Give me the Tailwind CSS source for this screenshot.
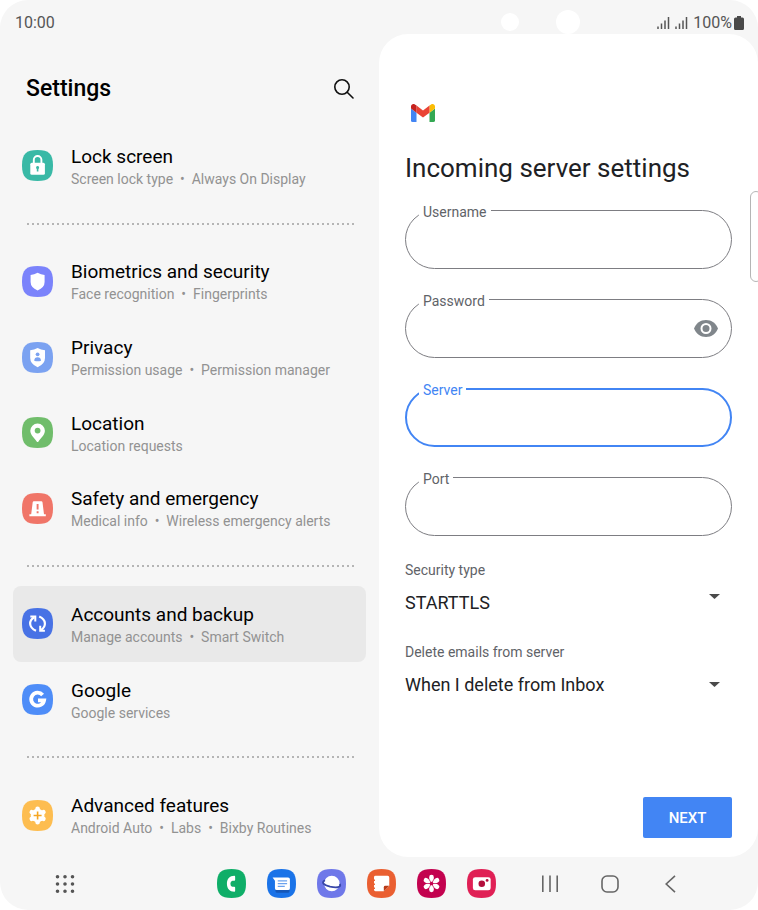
<!DOCTYPE html>
<html lang="en">
<head>
<meta charset="utf-8">
<meta name="viewport" content="width=device-width, initial-scale=1">
<title>Settings</title>
<script src="https://cdn.jsdelivr.net/npm/@tailwindcss/browser@4"></script>
</head>
<body class="bg-white font-[Roboto,sans-serif] text-black">
<svg class="hidden">
  <symbol id="squircle" viewBox="0 0 31 31"><path d="M15.500 0C27 0 31 4 31 15.500S27 31 15.500 31 0 27 0 15.500 4 0 15.500 0Z" fill="currentColor"/></symbol>
</svg>
<div class="relative flex min-h-screen flex-col overflow-hidden rounded-[28px] bg-[#f6f6f6]">
  <header class="relative flex h-[34px] items-center justify-between pt-3 pr-3.5 pl-[15px] text-base text-[#555]">
    <time>10:00</time>
    <div class="flex items-center gap-[5px]">
      <svg class="h-3 w-[13px]" viewBox="0 0 13 12" stroke="#555" stroke-width="1.500"><path d="M1 9.500V12M4.500 6.500V12M8 3.500V12M11.500 0V12"/></svg>
      <svg class="h-3 w-[13px]" viewBox="0 0 13 12" stroke="#555" stroke-width="1.500"><path d="M1 9.500V12M4.500 6.500V12M8 3.500V12M11.500 0V12"/></svg>
      <div class="flex items-center gap-0.5"><span>100%</span>
      <svg class="h-3.5 w-[10px]" viewBox="0 0 10 14"><path d="M3 0H7V1.500H8.500Q10 1.500 10 3V12.500Q10 14 8.500 14H1.500Q0 14 0 12.500V3Q0 1.500 1.500 1.500H3Z" fill="#4a4a4a"/></svg></div>
    </div>
    <span class="absolute top-[13px] left-[501px] size-[18px] rounded-full bg-white"></span>
    <span class="absolute top-[10px] left-[556px] size-[24px] rounded-full bg-white"></span>
  </header>

  <div class="grid flex-1 grid-cols-2">
    <nav class="flex flex-col px-[13px] pb-1" aria-label="Settings">
      <div class="flex h-[94px] items-center justify-between pt-4 pr-3 pl-[13px]">
        <h1 class="text-[23px] font-medium">Settings</h1>
        <button aria-label="Search" class="flex size-5 items-center justify-center"><svg class="size-5" viewBox="0 0 20 20" fill="none" stroke="#111" stroke-width="1.600" stroke-linecap="round"><circle cx="8" cy="8" r="7.200"/><path d="M13.200 13.200L19 19"/></svg></button>
      </div>

      <a href="#" class="flex flex-1 items-center gap-[18px] rounded-lg pl-[9px]">
        <svg class="size-[31px] shrink-0 text-[#39b9a6]" viewBox="0 0 31 31"><use href="#squircle"/><path d="M11.800 14V9.800a3.800 3.800 0 0 1 7.600 0V14" fill="none" stroke="#fff" stroke-width="1.900"/><rect x="8.300" y="12.700" width="14.600" height="12" rx="1.500" fill="#fff"/><path d="M15.600 16a1.700 1.700 0 0 1 .8 3.100V21.500h-1.600V19.100A1.700 1.700 0 0 1 15.600 16Z" fill="currentColor"/></svg>
        <span class="flex flex-col pt-0.5"><span class="text-[19px] leading-6">Lock screen</span><span class="text-sm leading-5 whitespace-pre text-[#929292]">Screen lock type  •  Always On Display</span></span>
      </a>
      <div class="flex h-10 items-center pr-[10px] pl-3.5"><div class="h-0.5 w-full bg-[repeating-linear-gradient(90deg,#b5b5b5_0_2px,transparent_2px_5px)]"></div></div>
      <a href="#" class="flex flex-1 items-center gap-[18px] rounded-lg pl-[9px]">
        <svg class="size-[31px] shrink-0 text-[#7b83fb]" viewBox="0 0 31 31"><use href="#squircle"/><path d="M15.600 6.800Q19 8.800 22.600 8.900V16Q22.600 21.500 15.600 24.500Q8.600 21.500 8.600 16V8.900Q12.200 8.800 15.600 6.800Z" fill="#fff"/></svg>
        <span class="flex flex-col pt-0.5"><span class="text-[19px] leading-6">Biometrics and security</span><span class="text-sm leading-5 whitespace-pre text-[#929292]">Face recognition  •  Fingerprints</span></span>
      </a>
      <a href="#" class="flex flex-1 items-center gap-[18px] rounded-lg pl-[9px]">
        <svg class="size-[31px] shrink-0 text-[#7ba2f1]" viewBox="0 0 31 31"><use href="#squircle"/><path d="M15.600 6Q19 8 23 8.200V16Q23 22 15.600 25.200Q8.200 22 8.200 16V8.200Q12.200 8 15.600 6Z" fill="#fff"/><circle cx="15.600" cy="12.300" r="1.900" fill="currentColor"/><path d="M12.200 18.700Q12.400 15.300 15.600 15.300T19 18.700Q15.600 20 12.200 18.700Z" fill="currentColor"/></svg>
        <span class="flex flex-col pt-0.5"><span class="text-[19px] leading-6">Privacy</span><span class="text-sm leading-5 whitespace-pre text-[#929292]">Permission usage  •  Permission manager</span></span>
      </a>
      <a href="#" class="flex flex-1 items-center gap-[18px] rounded-lg pl-[9px]">
        <svg class="size-[31px] shrink-0 text-[#70bd6b]" viewBox="0 0 31 31"><use href="#squircle"/><path d="M15.600 6.500a7.300 7.300 0 0 1 7.300 7.300c0 4.200-4.300 7.500-6.400 10.600q-.9 1-1.800 0C12.600 21.300 8.300 18 8.300 13.800a7.300 7.300 0 0 1 7.300-7.300Z" fill="#fff"/><circle cx="15.600" cy="13.600" r="2.900" fill="currentColor"/></svg>
        <span class="flex flex-col pt-0.5"><span class="text-[19px] leading-6">Location</span><span class="text-sm leading-5 whitespace-pre text-[#929292]">Location requests</span></span>
      </a>
      <a href="#" class="flex flex-1 items-center gap-[18px] rounded-lg pl-[9px]">
        <svg class="size-[31px] shrink-0 text-[#f07568]" viewBox="0 0 31 31"><use href="#squircle"/><path d="M11.800 8.300H19.400Q20.300 8.300 20.500 9.300L22 21.300H23.800V23.300H7.400V21.300H9.200L10.700 9.300Q10.900 8.300 11.800 8.300Z" fill="#fff"/><path d="M15.600 11V16.500M15.600 18.200V20.200" stroke="currentColor" stroke-width="1.900"/></svg>
        <span class="flex flex-col pt-0.5"><span class="text-[19px] leading-6">Safety and emergency</span><span class="text-sm leading-5 whitespace-pre text-[#929292]">Medical info  •  Wireless emergency alerts</span></span>
      </a>
      <div class="flex h-10 items-center pr-[10px] pl-3.5"><div class="h-0.5 w-full bg-[repeating-linear-gradient(90deg,#b5b5b5_0_2px,transparent_2px_5px)]"></div></div>
      <a href="#" aria-current="page" class="flex flex-1 items-center gap-[18px] rounded-lg bg-[#e9e9e9] pl-[9px]">
        <svg class="size-[31px] shrink-0 text-[#4872e5]" viewBox="0 0 31 31"><use href="#squircle"/><path d="M14 22.800C6.500 19.500 6.500 12.500 12.300 9.200M17.200 8.400C24.500 11.500 24.500 18.500 18.900 22" fill="none" stroke="#fff" stroke-width="2.200"/><path d="M8.300 8.500H13.300V13.500M22.900 22.700H18.200V17.700" fill="none" stroke="#fff" stroke-width="2"/></svg>
        <span class="flex flex-col pt-0.5"><span class="text-[19px] leading-6">Accounts and backup</span><span class="text-sm leading-5 whitespace-pre text-[#929292]">Manage accounts  •  Smart Switch</span></span>
      </a>
      <a href="#" class="flex flex-1 items-center gap-[18px] rounded-lg pl-[9px]">
        <svg class="size-[31px] shrink-0 text-[#4e8df8]" viewBox="0 0 31 31"><use href="#squircle"/><path d="M20.600 10.900A6.500 6.500 0 1 0 22.100 16.300H16" fill="none" stroke="#fff" stroke-width="3.800"/></svg>
        <span class="flex flex-col pt-0.5"><span class="text-[19px] leading-6">Google</span><span class="text-sm leading-5 whitespace-pre text-[#929292]">Google services</span></span>
      </a>
      <div class="flex h-10 items-center pr-[10px] pl-3.5"><div class="h-0.5 w-full bg-[repeating-linear-gradient(90deg,#b5b5b5_0_2px,transparent_2px_5px)]"></div></div>
      <a href="#" class="flex flex-1 items-center gap-[18px] rounded-lg pl-[9px]">
        <svg class="size-[31px] shrink-0 text-[#fdbd50]" viewBox="0 0 31 31"><use href="#squircle"/><circle cx="15.600" cy="15.500" r="6.800" fill="#fff"/><path d="M15.600 8.800V22.200M9.800 12.200L21.400 18.800M9.800 18.800L21.400 12.200" stroke="#fff" stroke-width="4.600" stroke-linecap="round"/><path d="M15.600 11.500V19.500M11.600 15.500H19.600" stroke="#f5a623" stroke-width="1.600"/></svg>
        <span class="flex flex-col pt-0.5"><span class="text-[19px] leading-6">Advanced features</span><span class="text-sm leading-5 whitespace-pre text-[#929292]">Android Auto  •  Labs  •  Bixby Routines</span></span>
      </a>
    </nav>

    <main class="flex flex-col rounded-[29px] bg-white pt-[70px] pr-[26px] pb-[19px] pl-[26px] text-[#202124]">
      <svg class="ml-1.5 h-[18px] w-6" viewBox="0 0 24 18"><path fill="#4285f4" d="M1.600 18H5.500V8.700L0 4.600V16.400Q0 18 1.600 18Z"/><path fill="#34a853" d="M18.500 18H22.400Q24 18 24 16.400V4.600L18.500 8.700Z"/><path fill="#fbbc04" d="M18.500 1.600V8.700L24 4.600V2.400C24 .4 21.700-.7 20.100.5Z"/><path fill="#ea4335" d="M5.500 8.700V1.600L12 6.500 18.500 1.600V8.700L12 13.600Z"/><path fill="#c5221f" d="M0 2.400V4.600L5.500 8.700V1.600L3.900.5C2.300-.7 0 .4 0 2.400Z"/></svg>
      <h2 class="mt-7 text-[26px] leading-9">Incoming server settings</h2>
      <form class="mt-6 flex flex-1 flex-col">
        <div class="flex flex-col gap-[30px]">
          <div class="relative">
            <label for="username" class="absolute -top-2 left-3.5 bg-white px-1 text-sm leading-5 text-[#5f6368]">Username</label>
            <input id="username" type="text" class="block h-[59px] w-full rounded-full border border-[#7d7d82] px-7 outline-none">
          </div>
          <div class="relative">
            <label for="password" class="absolute -top-2 left-3.5 bg-white px-1 text-sm leading-5 text-[#5f6368]">Password</label>
            <input id="password" type="password" class="block h-[59px] w-full rounded-full border border-[#7d7d82] pr-14 pl-7 outline-none">
            <button type="button" aria-label="Show password" class="absolute top-[21px] right-3.5"><svg class="h-[17px] w-6" viewBox="0 0 24 17"><path d="M12 0C6.500 0 2 3.400 0 8.500 2 13.600 6.500 17 12 17S22 13.600 24 8.500C22 3.400 17.500 0 12 0Z" fill="#80868b"/><circle cx="12" cy="8.500" r="4.500" fill="#80868b" stroke="#fff" stroke-width="2"/></svg></button>
          </div>
          <div class="relative">
            <label for="server" class="absolute -top-2 left-3.5 bg-white px-1 text-sm leading-5 text-[#4285f4]">Server</label>
            <input id="server" type="text" class="block h-[59px] w-full rounded-full border-2 border-[#4285f4] px-7 outline-none">
          </div>
          <div class="relative">
            <label for="port" class="absolute -top-2 left-3.5 bg-white px-1 text-sm leading-5 text-[#5f6368]">Port</label>
            <input id="port" type="text" class="block h-[59px] w-full rounded-full border border-[#7d7d82] px-7 outline-none">
          </div>
        </div>
        <label for="security" class="mt-6 text-sm leading-5 text-[#5f6368]">Security type</label>
        <div class="relative mt-2.5">
          <select id="security" class="block h-[26px] w-full appearance-none text-lg leading-6"><option>STARTTLS</option></select>
          <svg class="pointer-events-none absolute top-1 right-3 h-[5px] w-[11px]" viewBox="0 0 11 5"><path d="M0 0H11L5.500 5Z" fill="#4a4a4a"/></svg>
        </div>
        <label for="delete" class="mt-[26px] text-sm leading-5 text-[#5f6368]">Delete emails from server</label>
        <div class="relative mt-2.5">
          <select id="delete" class="block h-[26px] w-full appearance-none text-lg leading-6"><option>When I delete from Inbox</option></select>
          <svg class="pointer-events-none absolute top-2.5 right-3 h-[5px] w-[11px]" viewBox="0 0 11 5"><path d="M0 0H11L5.500 5Z" fill="#4a4a4a"/></svg>
        </div>
        <button type="button" class="mt-auto h-[41px] w-[89px] self-end rounded-xs bg-[#4285f4] pt-0.5 text-[15px] font-medium text-white">NEXT</button>
      </form>
    </main>
  </div>

  <span class="absolute top-[191px] -right-1 h-[91px] w-3 rounded-lg border border-[#b5b5b5] bg-white"></span>

  <footer class="flex h-[53px] items-center pl-[55px]">
    <button aria-label="All apps"><svg class="size-5" viewBox="0 0 20 20" fill="none" stroke="#555" stroke-width="3.600" stroke-linecap="round"><path d="M2.500 2.800h.01M10 2.800h.01M17.500 2.800h.01M2.500 10h.01M10 10h.01M17.500 10h.01M2.500 17.300h.01M10 17.300h.01M17.500 17.300h.01"/></svg></button>
    <div class="ml-[142px] flex gap-[21px]">
      <button aria-label="Phone"><svg class="size-[29px] text-[#0fae68]" viewBox="0 0 31 31"><use href="#squircle"/><path d="M18.600 7.300Q19.400 7.300 19.400 8.200V11.700Q19.400 12.500 18.500 12.500H16.500Q14.300 13 14.300 15.700T16.500 19H18.500Q19.400 19 19.400 19.800V23.500Q19.400 24.300 18.600 24.300C13.500 24.300 10.600 21 10.600 15.800S13.500 7.300 18.600 7.300Z" fill="#fff"/></svg></button>
      <button aria-label="Messages"><svg class="size-[29px] text-[#1a73e8]" viewBox="0 0 31 31"><use href="#squircle"/><path d="M9 21H24V23.500Q24 25.500 22 25.500H11Q9 25.500 9 23.500Z" fill="#1557b8"/><path d="M6 9H22.500Q24.500 9 24.500 11V20.500Q24.500 22.500 22.500 22.500H10.500Q8.500 22.500 8.500 20.500V12.500Z" fill="#fff"/><path d="M11.500 12.800H21.500M11.500 15.700H21.500M11.500 18.600H19" stroke="#6ba2ee" stroke-width="1.300"/></svg></button>
      <button aria-label="Internet"><svg class="size-[29px] text-[#6f78e9]" viewBox="0 0 31 31"><use href="#squircle"/><circle cx="15.800" cy="15.500" r="8.300" fill="#fff"/><path d="M8.500 12C4 14.500 7 17 14 18.800C20 20.200 26.500 20 24.500 16" fill="none" stroke="#3846a8" stroke-width="1.900"/></svg></button>
      <button aria-label="Notes"><svg class="size-[29px] text-[#ea5f31]" viewBox="0 0 31 31"><use href="#squircle"/><path d="M9 7.300H22Q23.800 7.300 23.800 9V18L18 23.800H9Q7.500 23.800 7.500 22.300V21.300H8.500V19.800H7.500V17H8.500V15.500H7.500V12.700H8.500V11.200H7.500V8.800Q7.500 7.300 9 7.300Z" fill="#fff"/><path d="M18 23.800V19.500Q18 18 19.500 18H23.800Z" fill="#b93a16"/></svg></button>
      <button aria-label="Gallery"><svg class="size-[29px] text-[#c3024f]" viewBox="0 0 31 31"><use href="#squircle"/><path d="M15.500 8.700V22.300M9.600 12.100L21.400 18.900M9.600 18.900L21.400 12.100" stroke="#fff" stroke-width="5" stroke-linecap="round"/><path d="M12 9.400L19 21.600M19 9.400L12 21.600M8.500 15.500H22.500" stroke="#c3024f" stroke-width=".8"/><circle cx="15.500" cy="15.500" r="2" fill="#c3024f"/></svg></button>
      <button aria-label="Camera"><svg class="size-[29px] text-[#e02055]" viewBox="0 0 31 31"><use href="#squircle"/><rect x="6.300" y="8.700" width="19" height="14" rx="2.500" fill="#fff"/><circle cx="15.800" cy="15.700" r="3.500" fill="#b30e3c"/><circle cx="21.500" cy="12.200" r="1.500" fill="#b30e3c"/></svg></button>
    </div>
    <div class="ml-[45px] flex items-center">
      <button aria-label="Recent apps"><svg class="h-[18px] w-[18px]" viewBox="0 0 18 18" stroke="#666" stroke-width="1.600"><path d="M1.800 .5V17M9 .5V17M16.200 .5V17"/></svg></button>
      <button aria-label="Home" class="ml-[42px]"><svg class="size-[18px]" viewBox="0 0 18 18" fill="none" stroke="#666" stroke-width="1.600"><rect x="1" y="1" width="16" height="16" rx="5"/></svg></button>
      <button aria-label="Back" class="ml-[46px]"><svg class="h-[18px] w-[11px]" viewBox="0 0 11 18" fill="none" stroke="#666" stroke-width="1.600"><path d="M10 .8L1.200 9L10 17.200"/></svg></button>
    </div>
  </footer>
</div>
</body>
</html>
